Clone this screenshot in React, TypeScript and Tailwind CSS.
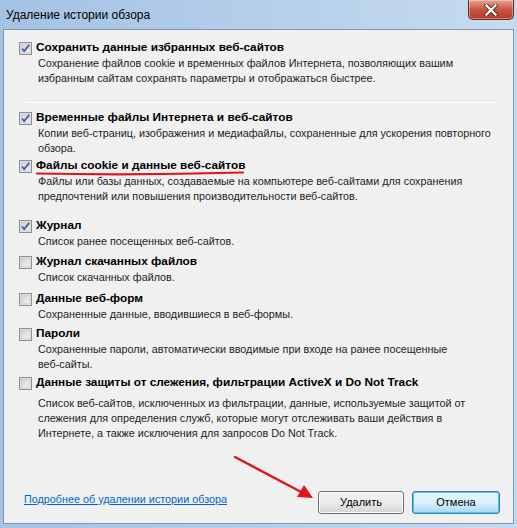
import React from "react"

type Item = {
  title: string
  desc: string[]
  checked: boolean
  mt: string
  descMt?: string
}

const items: Item[] = [
  {
    title: "Временные файлы Интернета и веб-сайтов",
    desc: ["Копии веб-страниц, изображения и медиафайлы, сохраненные для ускорения повторного", "обзора."],
    checked: true,
    mt: "mt-[7px]",
  },
  {
    title: "Файлы cookie и данные веб-сайтов",
    desc: ["Файлы или базы данных, создаваемые на компьютере веб-сайтами для сохранения", "предпочтений или повышения производительности веб-сайтов."],
    checked: true,
    mt: "mt-[2px]",
  },
  {
    title: "Журнал",
    desc: ["Список ранее посещенных веб-сайтов."],
    checked: true,
    mt: "mt-[14px]",
  },
  {
    title: "Журнал скачанных файлов",
    desc: ["Список скачанных файлов."],
    checked: false,
    mt: "mt-[5px]",
  },
  {
    title: "Данные веб-форм",
    desc: ["Сохраненные данные, вводившиеся в веб-формы."],
    checked: false,
    mt: "mt-[6px]",
  },
  {
    title: "Пароли",
    desc: ["Сохраненные пароли, автоматически вводимые при входе на ранее посещенные", "веб-сайты."],
    checked: false,
    mt: "mt-[4px]",
  },
  {
    title: "Данные защиты от слежения, фильтрации ActiveX и Do Not Track",
    desc: [
      "Список веб-сайтов, исключенных из фильтрации, данные, используемые защитой от",
      "слежения для определения служб, которые могут отслеживать ваши действия в",
      "Интернете, а также исключения для запросов Do Not Track.",
    ],
    checked: false,
    mt: "mt-[3px]",
    descMt: "mt-[5px]",
  },
]

function CheckBox({ checked }: { checked: boolean }) {
  return (
    <svg width="13" height="13" viewBox="0 0 13 13" className="shrink-0">
      <defs>
        <linearGradient id="cbg" x1="0" y1="0" x2="1" y2="1">
          <stop offset="0" stopColor="#cbcfd5" />
          <stop offset="1" stopColor="#f6f6f6" />
        </linearGradient>
      </defs>
      <rect x="0.5" y="0.5" width="12" height="12" fill="#f4f4f4" stroke="#8f8f8f" />
      <rect x="2" y="2" width="9" height="9" fill="url(#cbg)" stroke="#c4c8ce" strokeWidth="1" />
      {checked && (
        <path d="M3 6.5 L5.2 9.2 L10.2 2.8" fill="none" stroke="#4c61a2" strokeWidth="1.9" strokeLinejoin="round" />
      )}
    </svg>
  )
}

function Row({ item }: { item: Item }) {
  return (
    <div className={item.mt}>
      <div className="flex items-center h-[16px] pl-[15px]">
        <CheckBox checked={item.checked} />
        <span className="ml-[4px] font-bold text-black whitespace-nowrap text-[11.8px]">{item.title}</span>
      </div>
      <div className={`${item.descMt ?? "mt-0"} pl-[34px]`}>
        {item.desc.map((d) => (
          <div key={d} className="h-[15px] leading-[15px] whitespace-nowrap">
            {d}
          </div>
        ))}
      </div>
    </div>
  )
}

export default function App() {
  return (
    <div
      className="relative w-[517px] h-[528px] overflow-hidden bg-gradient-to-r from-[#a4c2e4] to-[#c6dbef] text-[10.8px] text-[#1e1e1e]"
      style={{ fontFamily: '"Liberation Sans", Arial, sans-serif' }}
    >
      <div className="h-[29px] flex items-center pl-[6px] pt-[1px] text-[12px] text-black">
        Удаление истории обзора
      </div>

      <div className="absolute top-0 right-[3px] w-[46px] h-[20px] rounded-b-[5px] border border-t-0 border-[#6e2a22] bg-gradient-to-b from-[#e8a394] via-[#c85443] to-[#b83a26] flex items-center justify-center shadow-[inset_0_0_0_1px_rgba(255,255,255,0.35)]">
        <svg width="14" height="12" viewBox="0 0 14 12">
          <path d="M2.5 1.5 L11.5 10.5 M11.5 1.5 L2.5 10.5" stroke="#4a1d18" strokeWidth="4" strokeLinecap="square" />
          <path d="M2.5 1.5 L11.5 10.5 M11.5 1.5 L2.5 10.5" stroke="#ffffff" strokeWidth="2.4" strokeLinecap="square" />
        </svg>
      </div>

      <div className="mx-[3px] h-[495px] border border-[#7f96b4] bg-[#f0f0f0] flex flex-col pt-[10px]">
        <Row
          item={{
            title: "Сохранить данные избранных веб-сайтов",
            desc: [
              "Сохранение файлов cookie и временных файлов Интернета, позволяющих вашим",
              "избранным сайтам сохранять параметры и отображаться быстрее.",
            ],
            checked: true,
            mt: "mt-0",
          }}
        />
        <div className="mt-[16px] ml-[21px] mr-[16px] h-px bg-[#a0a0a0] border-b border-white" />
        {items.map((it) => (
          <Row key={it.title} item={it} />
        ))}

        <div className="mt-auto mb-[9px] flex items-end justify-between pl-[20px] pr-[13px]">
          <a className="text-[#0066cc] underline mb-[7px] cursor-pointer">Подробнее об удалении истории обзора</a>
          <div className="flex gap-[8px]">
            <button className="w-[86px] h-[23px] rounded-[3px] border border-[#707070] bg-gradient-to-b from-[#f2f2f2] via-[#ebebeb] to-[#d4d4d4] text-black text-[11px] shadow-[inset_0_0_0_1px_#fcfcfc]">
              Удалить
            </button>
            <button className="w-[88px] h-[23px] rounded-[3px] border border-[#3c7fb1] bg-gradient-to-b from-[#eaf6fd] via-[#d9f0fc] to-[#a7d9f5] text-black text-[11px] shadow-[inset_0_0_0_1px_#48c4f5]">
              Отмена
            </button>
          </div>
        </div>
      </div>

      <svg className="absolute inset-0 pointer-events-none" width="517" height="528">
        <path d="M37 173.5 Q140 175.5 243 172.5" stroke="#e0141a" strokeWidth="2.2" fill="none" strokeLinecap="round" />
        <path d="M235 457 L305 494" stroke="#e0141a" strokeWidth="2.4" fill="none" strokeLinecap="round" />
        <path d="M313 498 L297 497 L304 485 Z" fill="#e0141a" />
      </svg>
    </div>
  )
}
